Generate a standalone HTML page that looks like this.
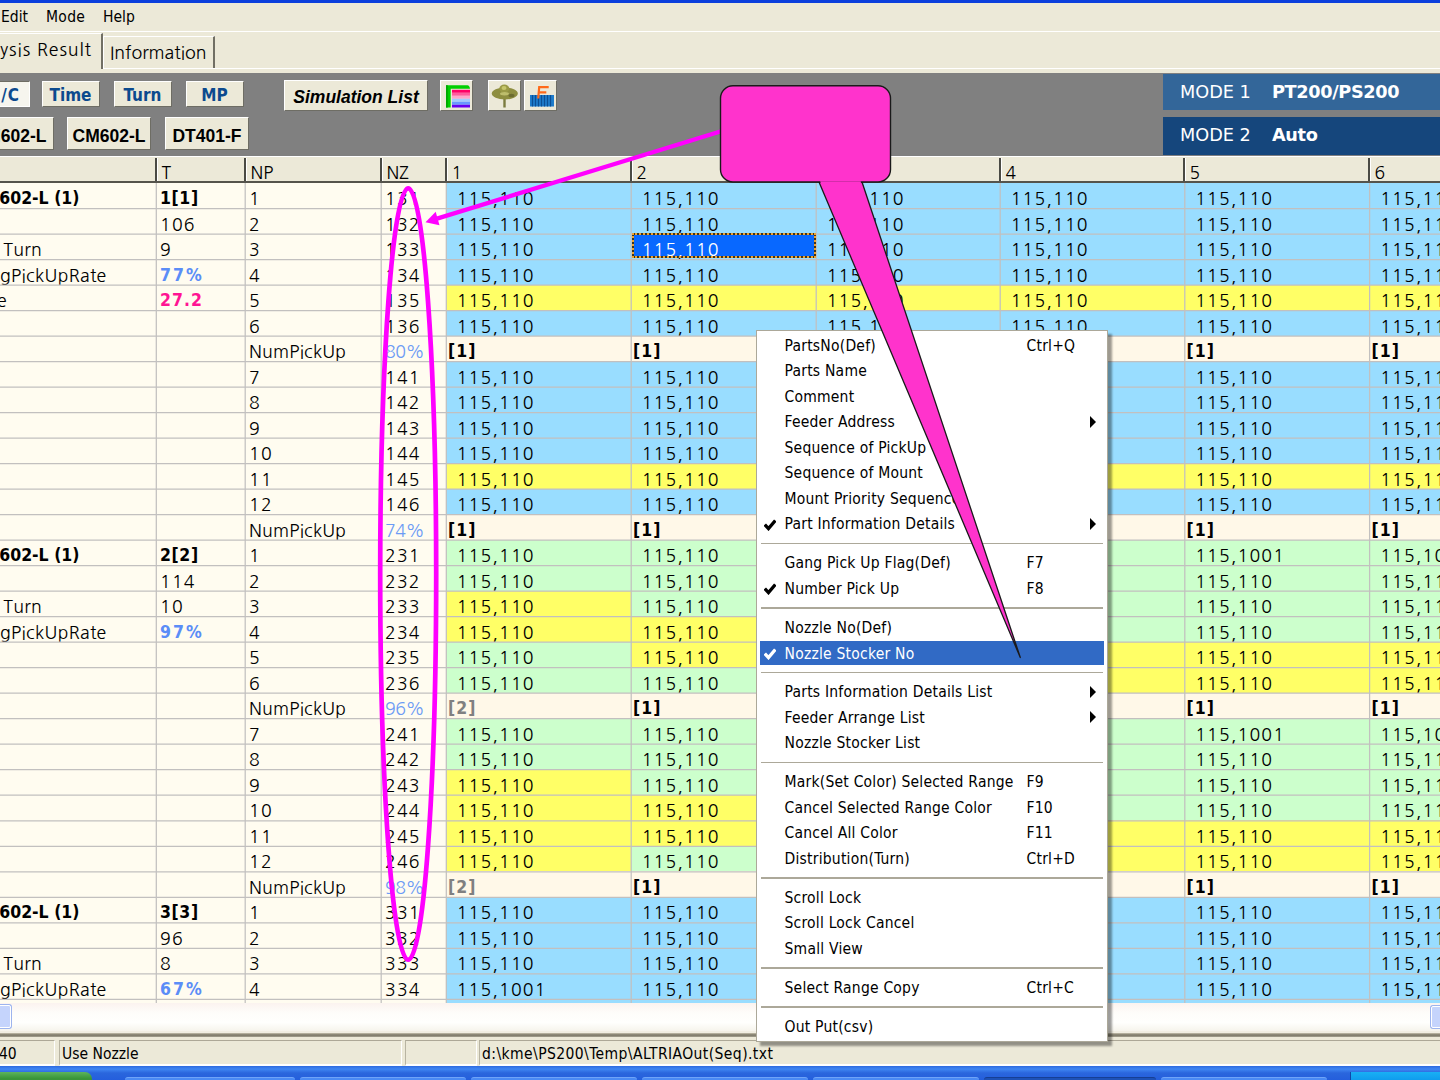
<!DOCTYPE html>
<html><head><meta charset="utf-8"><title>Analysis Result</title>
<style>
html,body{margin:0;padding:0}
body{width:1440px;height:1080px;overflow:hidden;position:relative;background:#ECE9D8;font-family:"DejaVu Sans","Liberation Sans",sans-serif;color:#000}
.a{position:absolute}
#cap{left:0;top:0;width:1440px;height:3px;background:#0B3FDD}
#menubar{left:0;top:3px;width:1440px;height:28px;font:15.5px/29px "DejaVu Sans Condensed","DejaVu Sans","Liberation Sans",sans-serif}
#menubar span{position:absolute;top:0}
#wl{left:0;top:31px;width:1440px;height:1px;background:#fff}
.tab{font:17.7px/20px "NanumGothic","Liberation Sans",sans-serif;white-space:nowrap;overflow:hidden;box-sizing:border-box}
#tab1{left:-6px;top:33px;width:109px;height:36px;border-top:1px solid #fff;border-right:2px solid #716F64;padding:6px 0 0 6px;letter-spacing:.9px}
#tab2{left:103px;top:36px;width:112px;height:32px;border-top:1px solid #fff;border-left:1px solid #fff;border-right:2px solid #716F64;padding:6px 0 0 6px}
#tabline{left:103px;top:68px;width:1337px;height:1px;background:#fff}
#tb{left:0;top:73px;width:1440px;height:83px;background:#808080}
.btn{position:absolute;box-sizing:border-box;background:#ECE9D8;border:1px solid;border-color:#fff #6E6D64 #6E6D64 #fff;font:bold 17.5px/24px "Liberation Sans",sans-serif;text-align:center;white-space:nowrap;overflow:hidden}
.bl{color:#0C4A8E;font:bold 17px/26px "DejaVu Sans Condensed","Liberation Sans",sans-serif}
#mode1{left:1163px;top:74px;width:277px;height:36px;background:#336699}
#mode2{left:1163px;top:117px;width:277px;height:38px;background:#15467C}
.mode{color:#fff;font:17.7px/37.5px "DejaVu Sans","Liberation Sans",sans-serif;white-space:nowrap}
.mode span{position:absolute;top:0}
.mode b{position:absolute;top:0;font-weight:bold;letter-spacing:-.35px}
/* grid */
#hdr{left:0;top:156px;width:1440px;height:27px;background:#ECE9D8;border-top:1px solid #fff;border-bottom:2px solid #55544C;box-sizing:border-box;font:17.5px/20px "NanumGothic","Liberation Sans",sans-serif}
#hdr div{position:absolute;top:1px;height:23px;border-left:2px solid #4A4A44;box-shadow:inset 1px 0 #fff;padding:5px 0 0 4.5px;box-sizing:border-box}
#grid{left:0;top:182.5px;width:1440px;height:820px;background:#FFFCF0;overflow:hidden}
.r{position:absolute;left:0;width:1600px;height:25.51px}
.c{position:absolute;top:0;height:25.51px;box-sizing:border-box;overflow:hidden;white-space:nowrap;font:17.7px/20px "NanumGothic","Liberation Sans",sans-serif;padding:6.5px 0 0 4px}
.c0{left:0;width:156px}.c1{left:156px;width:89px}.c2{left:245px;width:136px}.c3{left:381px;width:65px}
.d0{left:446px;width:185px}.d1{left:631px;width:185px}.d2{left:816px;width:184px}.d3{left:1000px;width:184.5px}.d4{left:1184.5px;width:185px}.d5{left:1369.5px;width:185px}
.n{letter-spacing:1.2px}
.v{padding-left:10.7px}
.b{background:#99DDFF}.y{background:#FFFF66}.g{background:#CCFFCC}.k{background:#FFF8E8}
.c1 b{letter-spacing:.6px}.c1 b.pb{letter-spacing:2px}.c1 b.pk{letter-spacing:1px}
.c b{font:bold 17.5px/20px "DejaVu Sans Condensed","DejaVu Sans","Liberation Sans",sans-serif;position:relative;top:-1px}
.pb{color:#5B8DF7}.pk{color:#FF1493}.pc{color:#6C9BF5}.gy{color:#808080}
.t{letter-spacing:.2px}
.ll{display:inline-block;letter-spacing:.3px}
.lb{margin-left:-32px}.ln{margin-left:-46.5px}.la{margin-left:-26px}.lt{margin-left:-38px}
.pb{letter-spacing:2px}.pk{letter-spacing:1px}.nb{letter-spacing:1px;margin-left:-2px}.pc{letter-spacing:-.5px}
.c.sel{background:#0868FF;color:#fff;border:0;top:-.5px;margin-left:.5px;width:184px;height:25.2px;padding-top:7px;padding-left:10.2px;z-index:2;outline:2px dotted #F0A32E;outline-offset:-2px;box-shadow:inset 0 0 0 2px #3A3420}

#sb{left:0;top:1002.5px;width:1440px;height:28px;background:linear-gradient(#FBF3EF,#FEFDFA 35%,#FFFFFD 70%,#F6F4EC)}
#thumb{left:-6px;top:1005px;width:17px;height:22.5px;background:#C5D4FC;border:1px solid #fff;box-shadow:0 0 0 1px #9DB4EE;border-radius:2px;box-sizing:border-box}
#sbr{left:1431px;top:1005.5px;width:12px;height:22px;background:#C5D4FC;border:1px solid #fff;box-shadow:0 0 0 1px #9DB4EE;border-radius:2px;box-sizing:border-box}
#sh1{left:0;top:1030.5px;width:1440px;height:3px;background:#F1EEE2}
#sh2{left:0;top:1033px;width:1440px;height:4.5px;background:linear-gradient(#C6C1AE,#7D7969 38%,#8A8675 62%,#DAD6C6)}
#sh3{left:0;top:1037.5px;width:1440px;height:2.5px;background:#ECE9D8}
#status{left:0;top:1037px;width:1440px;height:29px;background:#ECE9D8;font:15.5px/29px "DejaVu Sans Condensed","DejaVu Sans","Liberation Sans",sans-serif;white-space:pre}
#status div{position:absolute;top:3px;height:25.5px;box-sizing:border-box;border-left:1px solid #B8B4A2;border-top:1.5px solid #ADA897;border-right:1px solid #fff;border-bottom:2px solid #fff;line-height:26.5px;padding-left:2px;overflow:hidden}
#task{left:0;top:1066px;width:1440px;height:14px;background:linear-gradient(#2E6AE0,#3F86F2 22%,#2A66DD 50%,#245EDC)}
#start{left:-8px;top:1071.5px;width:100px;height:14px;background:linear-gradient(#5DB45D,#3A963A 45%,#348C34);border-radius:0 8px 8px 0}
.tk{position:absolute;top:1077px;height:6px;background:#4A8AF4;border-radius:3px 3px 0 0;border-top:1px solid #6FA4F8}
#tray{left:1350px;top:1072px;width:90px;height:8px;background:linear-gradient(#19B0F4,#0F9CEE);border-left:1.5px solid #1246A8}
/* context menu */
#menu{left:755.5px;top:329.5px;width:352.5px;height:712.5px;box-sizing:border-box;background:#fff;border:1px solid #ACA899;padding:2.25px 2px;box-shadow:3.5px 3.5px 2px rgba(0,0,0,.38);font:15.5px/27.3px "DejaVu Sans Condensed","DejaVu Sans","Liberation Sans",sans-serif;white-space:nowrap;letter-spacing:.22px}
#menu .i{position:relative;height:25.5px;padding-left:26px}
#menu .s{position:relative;height:13.5px}
#menu .s:after{content:"";position:absolute;left:2px;right:2px;top:6px;height:1.4px;background:#ACA899}
#menu .sk{position:absolute;left:268px;top:0}
#menu .ar{position:absolute;left:331px;top:6.5px;width:0;height:0;border-left:6.5px solid #000;border-top:6.2px solid transparent;border-bottom:6.2px solid transparent}
#menu .ck{position:absolute;left:5.800px;top:7.500px}
#menu .hl{background:#316AC5;color:#fff;height:24.6px;margin:.5px 1px .4px 1px;padding-left:25px;line-height:26.3px}
#menu .hl .ck{left:4.800px;top:7px}
</style></head>
<body>
<div class="a" id="cap"></div>
<div class="a" id="menubar"><span style="left:1px">Edit</span><span style="left:46px;letter-spacing:.3px">Mode</span><span style="left:103px">Help</span></div>
<div class="a" id="wl"></div>
<div class="a tab" id="tab1">ysis Result</div>
<div class="a tab" id="tab2">Information</div>
<div class="a" id="tabline"></div>
<div class="a" id="tb">
<div class="btn bl" style="left:-40px;top:8px;width:70px;height:26px;background:#F6F5EE;border-color:#6E6D64 #fff #fff #6E6D64;text-align:right;padding-right:9px;letter-spacing:1px">M/C</div>
<div class="btn bl" style="left:41.5px;top:8px;width:58px;height:25.5px">Time</div>
<div class="btn bl" style="left:113.5px;top:8px;width:58px;height:25.5px">Turn</div>
<div class="btn bl" style="left:185.5px;top:8px;width:58px;height:25.5px">MP</div>
<div class="btn" style="left:284px;top:6.5px;width:144px;height:31px;line-height:32px;font-style:italic">Simulation List</div>
<div class="btn" style="left:439.5px;top:6.5px;width:33px;height:31px"><svg width="31" height="29" viewBox="0 0 31 29" style="position:absolute;left:0;top:0"><path d="M5 4.300h21.500q2 0 2.500 3.500H9.700v18.700H5z" fill="#00D000"/><path d="M5 4.300h1.800v22.200H5z" fill="#00A800"/><rect x="11" y="8.800" width="18" height="3" fill="#FF0066"/><rect x="11" y="11.800" width="18" height="3" fill="#FF5C9E"/><rect x="11" y="14.800" width="18" height="3" fill="#FFA6CC"/><rect x="11" y="17.800" width="18" height="3" fill="#A4CCFF"/><rect x="11" y="20.800" width="18" height="3" fill="#6A98FF"/><rect x="11" y="23.800" width="18" height="2.700" fill="#6600F0"/></svg></div>
<div class="btn" style="left:487.500px;top:6.5px;width:33px;height:31px"><svg width="31" height="29" viewBox="0 0 31 29" style="position:absolute;left:0;top:0"><rect x="14.300" y="16" width="2.400" height="10.500" fill="#7C7C40"/><ellipse cx="15.800" cy="12.600" rx="13" ry="6" fill="#8E8E40"/><ellipse cx="15.300" cy="7.500" rx="5" ry="4" fill="#9A9A46"/><ellipse cx="15" cy="7" rx="2.500" ry="2" fill="#C6C66C"/><ellipse cx="15.500" cy="12.800" rx="4.500" ry="1.700" fill="#BDBD6C"/><ellipse cx="22.500" cy="14.500" rx="3" ry="1.800" fill="#6C6C30"/></svg></div>
<div class="btn" style="left:523.500px;top:6.5px;width:33px;height:31px"><svg width="31" height="29" viewBox="0 0 31 29" style="position:absolute;left:0;top:0"><rect x="5" y="14" width="24" height="11.500" fill="#1E7CCB"/><path d="M7.500 14v11.500M10.500 14v11.500M13.500 14v11.500M16.500 14v11.500M19.500 14v11.500M22.500 14v11.500M25.500 14v11.500" stroke="#0C4F94" stroke-width="1.200"/><path d="M13.200 17.500L14.200 6.200h9.500M13.800 11.300h7.500" stroke="#FF6A1A" stroke-width="2.200" fill="none"/></svg></div>
<div class="btn" style="left:-31px;top:44px;width:84.500px;height:32.500px;line-height:37px;text-align:right;padding-right:6px">CM602-L</div>
<div class="btn" style="left:67px;top:44px;width:84px;height:32.500px;line-height:37px">CM602-L</div>
<div class="btn" style="left:165px;top:44px;width:84px;height:32.500px;line-height:37px">DT401-F</div>
</div>
<div class="a mode" id="mode1"><span style="left:17px">MODE 1</span><b style="left:109px">PT200/PS200</b></div>
<div class="a mode" id="mode2"><span style="left:17px">MODE 2</span><b style="left:109px">Auto</b></div>
<div class="a" id="hdr"><div style="left:155px;width:89px">T</div><div style="left:244px;width:136px">NP</div><div style="left:380px;width:65px">NZ</div><div style="left:445px;width:185px">1</div><div style="left:630px;width:185px">2</div><div style="left:815px;width:184px">3</div><div style="left:999px;width:184px">4</div><div style="left:1183px;width:185px">5</div><div style="left:1368px;width:185px">6</div></div>
<div class="a" id="grid">
<div class="r" style="top:0px"><div class="c c0"><b class="lb">CM602-L (1)</b></div><div class="c c1"><b>1[1]</b></div><div class="c c2 n">1</div><div class="c c3 n">131</div><div class="c d0 b n v">115,110</div><div class="c d1 b n v">115,110</div><div class="c d2 b n v">115,110</div><div class="c d3 b n v">115,110</div><div class="c d4 b n v">115,110</div><div class="c d5 b n v">115,110</div></div>
<div class="r" style="top:25.51px"><div class="c c0"></div><div class="c c1 n">106</div><div class="c c2 n">2</div><div class="c c3 n">132</div><div class="c d0 b n v">115,110</div><div class="c d1 b n v">115,110</div><div class="c d2 b n v">115,110</div><div class="c d3 b n v">115,110</div><div class="c d4 b n v">115,110</div><div class="c d5 b n v">115,110</div></div>
<div class="r" style="top:51.02px"><div class="c c0"><span class="ll ln">Num Turn</span></div><div class="c c1 n">9</div><div class="c c2 n">3</div><div class="c c3 n">133</div><div class="c d0 b n v">115,110</div><div class="c d1 b n v">115,110</div><div class="c d1 n v sel">115,110</div><div class="c d2 b n v">115,110</div><div class="c d3 b n v">115,110</div><div class="c d4 b n v">115,110</div><div class="c d5 b n v">115,110</div></div>
<div class="r" style="top:76.53px"><div class="c c0"><span class="ll la">AvgPickUpRate</span></div><div class="c c1"><b class="pb">77%</b></div><div class="c c2 n">4</div><div class="c c3 n">134</div><div class="c d0 b n v">115,110</div><div class="c d1 b n v">115,110</div><div class="c d2 b n v">115,110</div><div class="c d3 b n v">115,110</div><div class="c d4 b n v">115,110</div><div class="c d5 b n v">115,110</div></div>
<div class="r" style="top:102.04px"><div class="c c0"><span class="ll lt">Time</span></div><div class="c c1"><b class="pk">27.2</b></div><div class="c c2 n">5</div><div class="c c3 n">135</div><div class="c d0 y n v">115,110</div><div class="c d1 y n v">115,110</div><div class="c d2 y n v">115,110</div><div class="c d3 y n v">115,110</div><div class="c d4 y n v">115,110</div><div class="c d5 y n v">115,110</div></div>
<div class="r" style="top:127.55px"><div class="c c0"></div><div class="c c1 n"></div><div class="c c2 n">6</div><div class="c c3 n">136</div><div class="c d0 b n v">115,110</div><div class="c d1 b n v">115,110</div><div class="c d2 b n v">115,110</div><div class="c d3 b n v">115,110</div><div class="c d4 b n v">115,110</div><div class="c d5 b n v">115,110</div></div>
<div class="r" style="top:153.06px"><div class="c c0"></div><div class="c c1 n"></div><div class="c c2 t">NumPickUp</div><div class="c c3 n pc">80%</div><div class="c d0 k"><b class="nb">[1]</b></div><div class="c d1 k"><b class="nb">[1]</b></div><div class="c d2 k"><b class="nb">[1]</b></div><div class="c d3 k"><b class="nb">[1]</b></div><div class="c d4 k"><b class="nb">[1]</b></div><div class="c d5 k"><b class="nb">[1]</b></div></div>
<div class="r" style="top:178.57px"><div class="c c0"></div><div class="c c1 n"></div><div class="c c2 n">7</div><div class="c c3 n">141</div><div class="c d0 b n v">115,110</div><div class="c d1 b n v">115,110</div><div class="c d2 b n v">115,110</div><div class="c d3 b n v">115,110</div><div class="c d4 b n v">115,110</div><div class="c d5 b n v">115,110</div></div>
<div class="r" style="top:204.08px"><div class="c c0"></div><div class="c c1 n"></div><div class="c c2 n">8</div><div class="c c3 n">142</div><div class="c d0 b n v">115,110</div><div class="c d1 b n v">115,110</div><div class="c d2 b n v">115,110</div><div class="c d3 b n v">115,110</div><div class="c d4 b n v">115,110</div><div class="c d5 b n v">115,110</div></div>
<div class="r" style="top:229.59px"><div class="c c0"></div><div class="c c1 n"></div><div class="c c2 n">9</div><div class="c c3 n">143</div><div class="c d0 b n v">115,110</div><div class="c d1 b n v">115,110</div><div class="c d2 b n v">115,110</div><div class="c d3 b n v">115,110</div><div class="c d4 b n v">115,110</div><div class="c d5 b n v">115,110</div></div>
<div class="r" style="top:255.1px"><div class="c c0"></div><div class="c c1 n"></div><div class="c c2 n">10</div><div class="c c3 n">144</div><div class="c d0 b n v">115,110</div><div class="c d1 b n v">115,110</div><div class="c d2 b n v">115,110</div><div class="c d3 b n v">115,110</div><div class="c d4 b n v">115,110</div><div class="c d5 b n v">115,110</div></div>
<div class="r" style="top:280.61px"><div class="c c0"></div><div class="c c1 n"></div><div class="c c2 n">11</div><div class="c c3 n">145</div><div class="c d0 y n v">115,110</div><div class="c d1 y n v">115,110</div><div class="c d2 y n v">115,110</div><div class="c d3 y n v">115,110</div><div class="c d4 y n v">115,110</div><div class="c d5 y n v">115,110</div></div>
<div class="r" style="top:306.12px"><div class="c c0"></div><div class="c c1 n"></div><div class="c c2 n">12</div><div class="c c3 n">146</div><div class="c d0 b n v">115,110</div><div class="c d1 b n v">115,110</div><div class="c d2 b n v">115,110</div><div class="c d3 b n v">115,110</div><div class="c d4 b n v">115,110</div><div class="c d5 b n v">115,110</div></div>
<div class="r" style="top:331.63px"><div class="c c0"></div><div class="c c1 n"></div><div class="c c2 t">NumPickUp</div><div class="c c3 n pc">74%</div><div class="c d0 k"><b class="nb">[1]</b></div><div class="c d1 k"><b class="nb">[1]</b></div><div class="c d2 k"><b class="nb">[1]</b></div><div class="c d3 k"><b class="nb">[1]</b></div><div class="c d4 k"><b class="nb">[1]</b></div><div class="c d5 k"><b class="nb">[1]</b></div></div>
<div class="r" style="top:357.14px"><div class="c c0"><b class="lb">CM602-L (1)</b></div><div class="c c1"><b>2[2]</b></div><div class="c c2 n">1</div><div class="c c3 n">231</div><div class="c d0 g n v">115,110</div><div class="c d1 g n v">115,110</div><div class="c d2 g n v">115,110</div><div class="c d3 g n v">115,110</div><div class="c d4 g n v">115,1001</div><div class="c d5 g n v">115,1001</div></div>
<div class="r" style="top:382.65px"><div class="c c0"></div><div class="c c1 n">114</div><div class="c c2 n">2</div><div class="c c3 n">232</div><div class="c d0 g n v">115,110</div><div class="c d1 g n v">115,110</div><div class="c d2 g n v">115,110</div><div class="c d3 g n v">115,110</div><div class="c d4 g n v">115,110</div><div class="c d5 g n v">115,110</div></div>
<div class="r" style="top:408.16px"><div class="c c0"><span class="ll ln">Num Turn</span></div><div class="c c1 n">10</div><div class="c c2 n">3</div><div class="c c3 n">233</div><div class="c d0 y n v">115,110</div><div class="c d1 g n v">115,110</div><div class="c d2 g n v">115,110</div><div class="c d3 g n v">115,110</div><div class="c d4 g n v">115,110</div><div class="c d5 g n v">115,110</div></div>
<div class="r" style="top:433.67px"><div class="c c0"><span class="ll la">AvgPickUpRate</span></div><div class="c c1"><b class="pb">97%</b></div><div class="c c2 n">4</div><div class="c c3 n">234</div><div class="c d0 y n v">115,110</div><div class="c d1 y n v">115,110</div><div class="c d2 g n v">115,110</div><div class="c d3 g n v">115,110</div><div class="c d4 g n v">115,110</div><div class="c d5 g n v">115,110</div></div>
<div class="r" style="top:459.18px"><div class="c c0"></div><div class="c c1 n"></div><div class="c c2 n">5</div><div class="c c3 n">235</div><div class="c d0 g n v">115,110</div><div class="c d1 y n v">115,110</div><div class="c d2 y n v">115,110</div><div class="c d3 y n v">115,110</div><div class="c d4 y n v">115,110</div><div class="c d5 y n v">115,110</div></div>
<div class="r" style="top:484.69px"><div class="c c0"></div><div class="c c1 n"></div><div class="c c2 n">6</div><div class="c c3 n">236</div><div class="c d0 g n v">115,110</div><div class="c d1 g n v">115,110</div><div class="c d2 y n v">115,110</div><div class="c d3 y n v">115,110</div><div class="c d4 y n v">115,110</div><div class="c d5 y n v">115,110</div></div>
<div class="r" style="top:510.2px"><div class="c c0"></div><div class="c c1 n"></div><div class="c c2 t">NumPickUp</div><div class="c c3 n pc">96%</div><div class="c d0 k"><b class="nb gy">[2]</b></div><div class="c d1 k"><b class="nb">[1]</b></div><div class="c d2 k"><b class="nb">[1]</b></div><div class="c d3 k"><b class="nb">[1]</b></div><div class="c d4 k"><b class="nb">[1]</b></div><div class="c d5 k"><b class="nb">[1]</b></div></div>
<div class="r" style="top:535.71px"><div class="c c0"></div><div class="c c1 n"></div><div class="c c2 n">7</div><div class="c c3 n">241</div><div class="c d0 g n v">115,110</div><div class="c d1 g n v">115,110</div><div class="c d2 g n v">115,110</div><div class="c d3 g n v">115,110</div><div class="c d4 g n v">115,1001</div><div class="c d5 g n v">115,1001</div></div>
<div class="r" style="top:561.22px"><div class="c c0"></div><div class="c c1 n"></div><div class="c c2 n">8</div><div class="c c3 n">242</div><div class="c d0 g n v">115,110</div><div class="c d1 g n v">115,110</div><div class="c d2 g n v">115,110</div><div class="c d3 g n v">115,110</div><div class="c d4 g n v">115,110</div><div class="c d5 g n v">115,110</div></div>
<div class="r" style="top:586.73px"><div class="c c0"></div><div class="c c1 n"></div><div class="c c2 n">9</div><div class="c c3 n">243</div><div class="c d0 y n v">115,110</div><div class="c d1 g n v">115,110</div><div class="c d2 g n v">115,110</div><div class="c d3 g n v">115,110</div><div class="c d4 g n v">115,110</div><div class="c d5 g n v">115,110</div></div>
<div class="r" style="top:612.24px"><div class="c c0"></div><div class="c c1 n"></div><div class="c c2 n">10</div><div class="c c3 n">244</div><div class="c d0 y n v">115,110</div><div class="c d1 y n v">115,110</div><div class="c d2 g n v">115,110</div><div class="c d3 g n v">115,110</div><div class="c d4 g n v">115,110</div><div class="c d5 g n v">115,110</div></div>
<div class="r" style="top:637.75px"><div class="c c0"></div><div class="c c1 n"></div><div class="c c2 n">11</div><div class="c c3 n">245</div><div class="c d0 y n v">115,110</div><div class="c d1 y n v">115,110</div><div class="c d2 y n v">115,110</div><div class="c d3 y n v">115,110</div><div class="c d4 y n v">115,110</div><div class="c d5 y n v">115,110</div></div>
<div class="r" style="top:663.26px"><div class="c c0"></div><div class="c c1 n"></div><div class="c c2 n">12</div><div class="c c3 n">246</div><div class="c d0 y n v">115,110</div><div class="c d1 g n v">115,110</div><div class="c d2 y n v">115,110</div><div class="c d3 y n v">115,110</div><div class="c d4 y n v">115,110</div><div class="c d5 y n v">115,110</div></div>
<div class="r" style="top:688.77px"><div class="c c0"></div><div class="c c1 n"></div><div class="c c2 t">NumPickUp</div><div class="c c3 n pc">98%</div><div class="c d0 k"><b class="nb gy">[2]</b></div><div class="c d1 k"><b class="nb">[1]</b></div><div class="c d2 k"><b class="nb">[1]</b></div><div class="c d3 k"><b class="nb">[1]</b></div><div class="c d4 k"><b class="nb">[1]</b></div><div class="c d5 k"><b class="nb">[1]</b></div></div>
<div class="r" style="top:714.28px"><div class="c c0"><b class="lb">CM602-L (1)</b></div><div class="c c1"><b>3[3]</b></div><div class="c c2 n">1</div><div class="c c3 n">331</div><div class="c d0 b n v">115,110</div><div class="c d1 b n v">115,110</div><div class="c d2 b n v">115,110</div><div class="c d3 b n v">115,110</div><div class="c d4 b n v">115,110</div><div class="c d5 b n v">115,110</div></div>
<div class="r" style="top:739.79px"><div class="c c0"></div><div class="c c1 n">96</div><div class="c c2 n">2</div><div class="c c3 n">332</div><div class="c d0 b n v">115,110</div><div class="c d1 b n v">115,110</div><div class="c d2 b n v">115,110</div><div class="c d3 b n v">115,110</div><div class="c d4 b n v">115,110</div><div class="c d5 b n v">115,110</div></div>
<div class="r" style="top:765.3px"><div class="c c0"><span class="ll ln">Num Turn</span></div><div class="c c1 n">8</div><div class="c c2 n">3</div><div class="c c3 n">333</div><div class="c d0 b n v">115,110</div><div class="c d1 b n v">115,110</div><div class="c d2 b n v">115,110</div><div class="c d3 b n v">115,110</div><div class="c d4 b n v">115,110</div><div class="c d5 b n v">115,110</div></div>
<div class="r" style="top:790.81px"><div class="c c0"><span class="ll la">AvgPickUpRate</span></div><div class="c c1"><b class="pb">67%</b></div><div class="c c2 n">4</div><div class="c c3 n">334</div><div class="c d0 b n v">115,1001</div><div class="c d1 b n v">115,110</div><div class="c d2 b n v">115,110</div><div class="c d3 b n v">115,110</div><div class="c d4 b n v">115,110</div><div class="c d5 b n v">115,110</div></div>
<div class="r" style="top:816.32px"><div class="c c0"><span class="ll lt">Time</span></div><div class="c c1"><b class="pk">21.5</b></div><div class="c c2 n">5</div><div class="c c3 n">335</div><div class="c d0 b n v">115,110</div><div class="c d1 b n v">115,110</div><div class="c d2 b n v">115,110</div><div class="c d3 b n v">115,110</div><div class="c d4 b n v">115,110</div><div class="c d5 b n v">115,110</div></div>
<svg class="a" style="left:0;top:0" width="1440" height="820"><path d="M0 25.51H1440M0 51.02H1440M0 76.53H1440M0 102.04H1440M0 127.55H1440M0 153.06H1440M0 178.57H1440M0 204.08H1440M0 229.59H1440M0 255.10H1440M0 280.61H1440M0 306.12H1440M0 331.63H1440M0 357.14H1440M0 382.65H1440M0 408.16H1440M0 433.67H1440M0 459.18H1440M0 484.69H1440M0 510.20H1440M0 535.71H1440M0 561.22H1440M0 586.73H1440M0 612.24H1440M0 637.75H1440M0 663.26H1440M0 688.77H1440M0 714.28H1440M0 739.79H1440M0 765.30H1440M0 790.81H1440M0 816.32H1440M0 841.83H1440M156.3 0V820M245.2 0V820M381.2 0V820M446.3 0V820M631.2 0V820M816.2 0V820M1000.2 0V820M1184.8 0V820M1369.6 0V820" stroke="#C2C0BF" stroke-width="1.25" fill="none"/></svg>
</div>
<div class="a" id="sb"></div><div class="a" id="thumb"></div><div class="a" id="sbr"></div>
<div class="a" id="sh1"></div><div class="a" id="sh2"></div><div class="a" id="sh3"></div>
<div class="a" id="status"><div style="left:-20px;width:75px;padding-left:18px">40</div><div style="left:59px;width:343px">Use Nozzle</div><div style="left:405px;width:72px"></div><div style="left:479px;width:970px;letter-spacing:.42px">d:\kme\PS200\Temp\ALTRIAOut(Seq).txt</div></div>
<div class="a" id="task"></div><div class="a" id="start"></div>
<div class="tk" style="left:125px;width:170px"></div><div class="tk" style="left:300px;width:166px"></div><div class="tk" style="left:471px;width:166px"></div><div class="tk" style="left:642px;width:166px"></div><div class="tk" style="left:813px;width:166px"></div><div class="tk" style="left:984px;width:172px;background:#1E52B7;border-top-color:#163F94"></div><div class="tk" style="left:1161px;width:166px"></div>
<div class="a" id="tray"></div>
<div class="a" id="menu">
<div class="i">PartsNo(Def)<span class="sk">Ctrl+Q</span></div>
<div class="i">Parts Name</div>
<div class="i">Comment</div>
<div class="i">Feeder Address<span class="ar"></span></div>
<div class="i">Sequence of PickUp</div>
<div class="i">Sequence of Mount</div>
<div class="i">Mount Priority Sequence</div>
<div class="i"><svg class="ck" width="12" height="12" viewBox="0 0 12 12"><path d="M.8 5.600L4.500 9.600L11.300 1.500" fill="none" stroke="currentColor" stroke-width="3.300"/></svg>Part Information Details<span class="ar"></span></div>
<div class="s"></div>
<div class="i">Gang Pick Up Flag(Def)<span class="sk">F7</span></div>
<div class="i"><svg class="ck" width="12" height="12" viewBox="0 0 12 12"><path d="M.8 5.600L4.500 9.600L11.300 1.500" fill="none" stroke="currentColor" stroke-width="3.300"/></svg>Number Pick Up<span class="sk">F8</span></div>
<div class="s"></div>
<div class="i">Nozzle No(Def)</div>
<div class="i hl"><svg class="ck" width="12" height="12" viewBox="0 0 12 12"><path d="M.8 5.600L4.500 9.600L11.300 1.500" fill="none" stroke="currentColor" stroke-width="3.300"/></svg>Nozzle Stocker No</div>
<div class="s"></div>
<div class="i">Parts Information Details List<span class="ar"></span></div>
<div class="i">Feeder Arrange List<span class="ar"></span></div>
<div class="i">Nozzle Stocker List</div>
<div class="s"></div>
<div class="i">Mark(Set Color) Selected Range<span class="sk">F9</span></div>
<div class="i">Cancel Selected Range Color<span class="sk">F10</span></div>
<div class="i">Cancel All Color<span class="sk">F11</span></div>
<div class="i">Distribution(Turn)<span class="sk">Ctrl+D</span></div>
<div class="s"></div>
<div class="i">Scroll Lock</div>
<div class="i">Scroll Lock Cancel</div>
<div class="i">Small View</div>
<div class="s"></div>
<div class="i">Select Range Copy<span class="sk">Ctrl+C</span></div>
<div class="s"></div>
<div class="i">Out Put(csv)</div>
</div>
<svg class="a" style="left:0;top:0" width="1440" height="1080" viewBox="0 0 1440 1080">
<ellipse cx="408.200" cy="574" rx="28" ry="385.700" fill="none" stroke="#FF00FF" stroke-width="4.700"/>
<path d="M722 131L437 218.600" stroke="#FF00FF" stroke-width="4.300" fill="none"/>
<path d="M425.500 222.200L435.700 211.800L439.500 225.200Z" fill="#FF00FF"/>
<path d="M819 182L862 182L1020.300 657.500Z" fill="#FF33CC" stroke="#1a1a1a" stroke-width="1.300" stroke-linejoin="round"/>
<rect x="720.500" y="85.800" width="170" height="96.200" rx="12.500" ry="12.500" fill="#FF33CC" stroke="#1a1a1a" stroke-width="1.400"/>
<path d="M820.200 181.300L860.700 181.300L861 183.500L820.800 183.500Z" fill="#FF33CC"/>
</svg>
</body></html>
